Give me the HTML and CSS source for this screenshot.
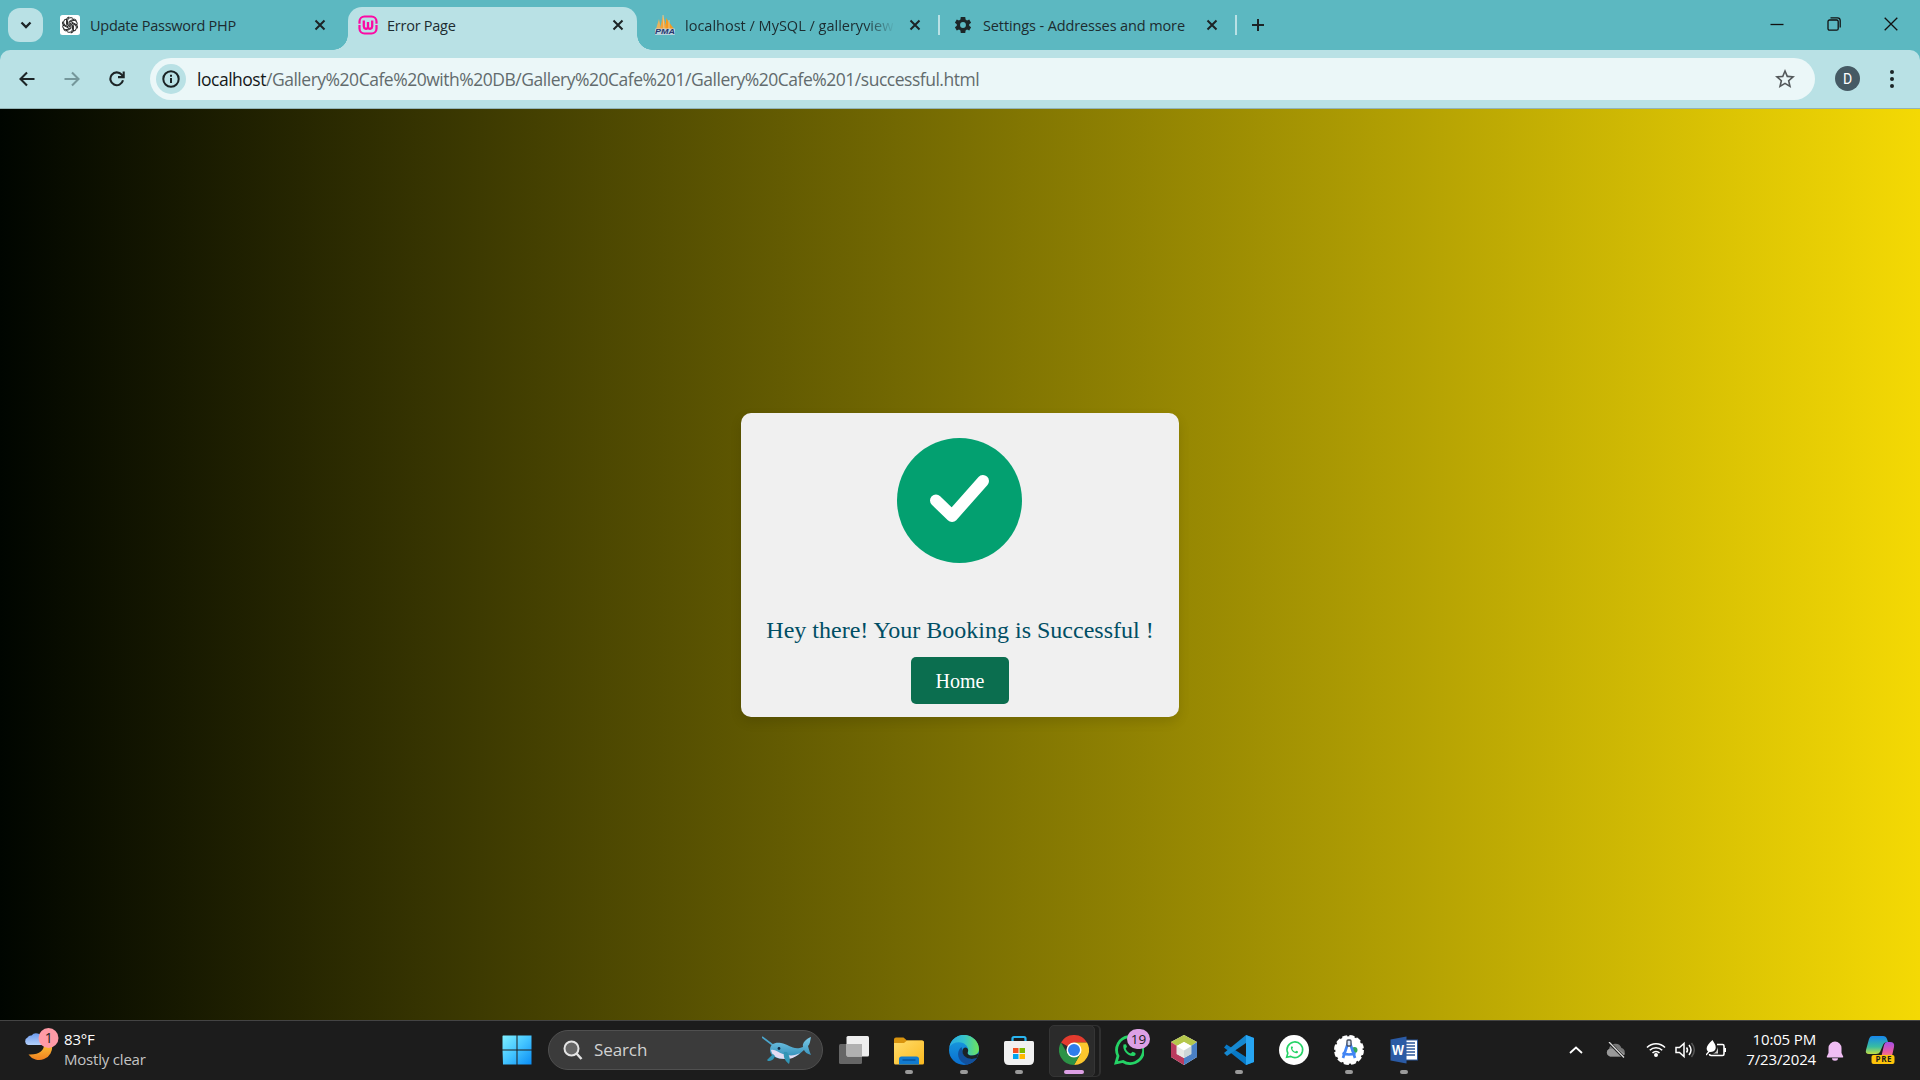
FILE: index.html
```html
<!DOCTYPE html>
<html lang="en">
<head>
<meta charset="utf-8">
<title>Error Page</title>
<link rel="stylesheet" href="styles.css">
</head>
<body>
<header class="tabstrip">
  <button class="tab-search"><svg width="12" height="8" viewBox="0 0 12 8"><path d="M1.500 1.500 6 6l4.500-4.500" fill="none" stroke="#1c2426" stroke-width="2.300"/></svg></button>
  <div class="tab first">
    <svg class="fav" viewBox="0 0 20 20"><rect width="20" height="20" rx="2.500" fill="#fff"/><g fill="none" stroke="#222" stroke-width=".95"><g id="petal"><path d="M7.500 9.200V5.800A3.300 3.300 0 0 1 13.600 4.200M9 10.500V6.600l3.500-2a3.300 3.300 0 0 1 4 .8"/></g><use href="#petal" transform="rotate(60 10 10)"/><use href="#petal" transform="rotate(120 10 10)"/><use href="#petal" transform="rotate(180 10 10)"/><use href="#petal" transform="rotate(240 10 10)"/><use href="#petal" transform="rotate(300 10 10)"/></g></svg>
    <span class="title t1">Update Password PHP</span>
    <svg class="x" viewBox="0 0 12 12"><path d="m1.500 1.500 9 9m0-9-9 9"/></svg>
  </div>
  <div class="tab active">
    <svg class="fav" viewBox="0 0 20 20"><rect x="1.500" y="1.500" width="17" height="17" rx="5" fill="none" stroke="#fb0ba4" stroke-width="2.200"/><path d="M0 9.300h4M16 9.300h4" stroke="#b9e1e5" stroke-width="1.300"/><path d="M5.800 5.500v6a2.300 2.300 0 0 0 4.200 1.200V7v5.700a2.300 2.300 0 0 0 4.200-1.200v-6" fill="none" stroke="#fb0ba4" stroke-width="2.300"/></svg>
    <span class="title t2">Error Page</span>
    <svg class="x" viewBox="0 0 12 12"><path d="m1.500 1.500 9 9m0-9-9 9"/></svg>
  </div>
  <div class="tab">
    <svg class="fav" viewBox="0 0 20 20"><path d="M1 14 4 4l2 10z" fill="#e9b45e"/><path d="m5 14 3-14 4 14z" fill="#f3a33a"/><path d="M11 14V3l8 11z" fill="#f59a20"/><path d="M8 0l1 14M14 5v9" stroke="#e6d3a5" stroke-width=".8"/><rect x="0" y="13.500" width="20" height="6.500" rx="1" fill="#d5dce6" opacity=".75"/><text x="0" y="19.300" textLength="20" lengthAdjust="spacingAndGlyphs" class="pma">PMA</text></svg>
    <span class="title t3">localhost / MySQL / galleryview</span>
    <svg class="x" viewBox="0 0 12 12"><path d="m1.500 1.500 9 9m0-9-9 9"/></svg>
    <i class="sep"></i>
  </div>
  <div class="tab">
    <svg class="fav gear" viewBox="0 0 24 24"><path fill="#1c2628" d="M19.400 13c.1-.3.1-.6.1-1s0-.7-.1-1l2.300-1.700-2.200-3.900-2.700 1.100c-.5-.4-1.100-.7-1.700-1L14.700 2.500H9.300L8.900 5.500c-.6.300-1.200.6-1.700 1L4.500 5.400 2.300 9.300 4.600 11c-.1.300-.1.700-.1 1s0 .7.100 1l-2.300 1.700 2.200 3.900 2.700-1.100c.5.400 1.100.7 1.700 1l.4 3h5.400l.4-3c.6-.3 1.200-.6 1.700-1l2.700 1.100 2.200-3.900zM12 15.500a3.500 3.500 0 1 1 0-7 3.500 3.500 0 0 1 0 7z"/></svg>
    <span class="title t4">Settings - Addresses and more</span>
    <svg class="x" viewBox="0 0 12 12"><path d="m1.500 1.500 9 9m0-9-9 9"/></svg>
    <i class="sep"></i>
  </div>
  <svg class="plus" width="14" height="14" viewBox="0 0 14 14"><path d="M7 1v12M1 7h12" stroke="#1c2426" stroke-width="2"/></svg>
  <div class="window-controls">
    <svg viewBox="0 0 14 14"><path d="M.5 7.500h13"/></svg>
    <svg viewBox="0 0 14 14"><rect x="1" y="3" width="10.200" height="10.200" rx="1.500"/><path d="M3.500.8h7a2.700 2.700 0 0 1 2.700 2.700v7"/></svg>
    <svg viewBox="0 0 14 14"><path d="m.7.7 12.600 12.600M13.300.7.700 13.300"/></svg>
  </div>
</header>
<div class="toolbar-wrap">
<nav class="toolbar">
  <svg class="nav-icon" viewBox="0 0 16 16"><path d="M15.500 8H1.800M8 1.500 1.500 8 8 14.500"/></svg>
  <svg class="nav-icon off" viewBox="0 0 16 16"><path d="M.5 8h13.700M8 1.500 14.500 8 8 14.500"/></svg>
  <svg class="nav-icon" viewBox="0 0 16 16"><path d="M14 9.300a6.400 6.400 0 1 1-1.300-5.600L14.500 5.500M14.700.5v5.600H9"/></svg>
  <div class="omnibox">
    <span class="info"><svg width="18" height="18" viewBox="0 0 18 18"><circle cx="9" cy="9" r="7.700" fill="none" stroke="#1a2325" stroke-width="2"/><path d="M9 8v5M9 4.800v2" stroke="#1a2325" stroke-width="2"/></svg></span>
    <span class="url"><b>localhost</b>/Gallery%20Cafe%20with%20DB/Gallery%20Cafe%201/Gallery%20Cafe%201/successful.html</span>
    <svg class="star" viewBox="0 0 24 24"><path fill="#54595b" d="m22 9.240-7.190-.62L12 2 9.190 8.630 2 9.240l5.460 4.730L5.820 21 12 17.270 18.180 21l-1.630-7.030zM12 15.400l-3.760 2.270 1-4.280-3.320-2.880 4.380-.38L12 6.100l1.710 4.040 4.380.38-3.320 2.880 1 4.280z"/></svg>
  </div>
  <span class="avatar">D</span>
  <svg class="dots" width="6" height="20" viewBox="0 0 6 20"><circle cx="3" cy="3" r="2"/><circle cx="3" cy="10" r="2"/><circle cx="3" cy="17" r="2"/></svg>
</nav>
</div>
<main class="page">
  <section class="card">
    <svg class="check" viewBox="0 0 125 125"><circle cx="62.500" cy="62.500" r="62.500" fill="#03a070"/><path d="m39 62.500 16 15.500 31-35" fill="none" stroke="#fff" stroke-width="12" stroke-linecap="round" stroke-linejoin="round"/></svg>
    <p class="message">Hey there! Your Booking is Successful !</p>
    <a class="home">Home</a>
  </section>
</main>
<footer class="taskbar">
  <div class="weather">
    <svg width="36" height="36" viewBox="0 0 36 36"><defs><linearGradient id="moon" x2="0" y2="1"><stop offset="0" stop-color="#fbbd34"/><stop offset="1" stop-color="#f08020"/></linearGradient><linearGradient id="cloud" x2="0" y2="1"><stop offset="0" stop-color="#6c9bee"/><stop offset="1" stop-color="#b4d0fa"/></linearGradient></defs><path d="M27 17a13 13 0 0 1-23.500 9.500C15 27 19 22 19 17z" transform="translate(1 1)" fill="url(#moon)"/><path d="M4 18a4 4 0 0 1-.5-7.500 4 4 0 0 1 4-2 6 6 0 0 1 10.500 2.500 3.500 3.500 0 0 1 0 7z" fill="url(#cloud)"/><circle cx="24.500" cy="11" r="10" fill="#ff9aa6"/><text x="24.800" y="16" text-anchor="middle" class="badge-text">1</text></svg>
    <div class="weather-text"><div class="temp">83°F</div><div class="cond">Mostly clear</div></div>
  </div>
  <div class="apps">
    <svg class="start" width="30" height="30" viewBox="0 0 30 30"><defs><linearGradient id="win" x2="1" y2="1"><stop offset="0" stop-color="#7ff0ff"/><stop offset=".5" stop-color="#43c4ff"/><stop offset="1" stop-color="#0a8df5"/></linearGradient></defs><path fill="url(#win)" d="M1 .5h13.500v14H.5V1zM15.500.5h14v14h-14zM.5 15.500h14v14H1zM15.500 15.500h14v14h-14z"/></svg>
    <div class="search">
      <svg width="20" height="20" viewBox="0 0 20 20"><circle cx="8.500" cy="8.500" r="7" fill="#666" stroke="#e4e4e4" stroke-width="2"/><path d="m13.500 13.500 5 5.500" stroke="#e4e4e4" stroke-width="2.500"/></svg>
      <span class="search-label">Search</span>
      <svg class="whale" width="50" height="28" viewBox="0 0 50 28"><defs><linearGradient id="wh" x2="0" y2="1"><stop offset="0" stop-color="#7ccbe9"/><stop offset="1" stop-color="#2c8ab5"/></linearGradient></defs><path d="m0 1 12 9" stroke="#4ba6cd" stroke-width="1.700"/><path d="M8 14c0-6 5-8 11-7 8 1 12 8 22 4C40 7 44 3 49 1c-1 5-1 7-3 9 1 4 2 7 3 9-4-1-6-3-7-5-6 6-12 9-19 9C14 23 8 20 8 14z" fill="url(#wh)"/><path d="M9 14c4-1 8 3 12 4 6 2 12 2 17-1-5 5-10 6-15 6-8 0-13-3-14-9z" fill="#e3dcf2"/><path d="m11 18-6 6 1 1c4 0 6-2 7-5zM22 16c-1 5 1 9 5 12 2-5 0-9-2-12z" fill="#3295b5"/><circle cx="17" cy="12.500" r="1.400" fill="#152b45"/></svg>
    </div>
    <div class="app"><svg viewBox="0 0 30 30"><rect x="0" y="9" width="23" height="20" rx="1.500" fill="#666"/><rect x="7.500" y="1" width="22.500" height="20.500" rx="1.500" fill="#eee"/><path d="M7.500 9H23v12.500H9a1.500 1.500 0 0 1-1.500-1.500z" fill="#b1b1b1"/></svg></div>
    <div class="app run"><svg viewBox="0 0 30 30"><defs><linearGradient id="fo" x2="1" y2="1"><stop offset="0" stop-color="#ffdc6b"/><stop offset="1" stop-color="#fbb91f"/></linearGradient></defs><path d="M0 4.500Q0 2.500 2 2.500h7.500L13 5.500h15q2 0 2 2V14H0z" fill="#d9940e"/><path d="M0 8h10l3-2.500h15q2 0 2 2V28q0 1.500-1.500 1.500h-27Q0 29.500 0 28z" fill="url(#fo)"/><path d="M5 29.500V24q0-2.500 2.500-2.500h15q2.500 0 2.500 2.500v5.500z" fill="#117bd0"/><path d="M8.500 25h13" stroke="#07539e" stroke-width="1.500"/></svg></div>
    <div class="app run"><svg viewBox="0 0 30 30"><defs><linearGradient id="e1" x2="1"><stop offset="0" stop-color="#27a9e5"/><stop offset=".5" stop-color="#36c3cb"/><stop offset="1" stop-color="#6ee45a"/></linearGradient><linearGradient id="e2" x2="0" y2="1"><stop offset="0" stop-color="#1aa0e0"/><stop offset="1" stop-color="#0a6ecf"/></linearGradient></defs><circle cx="15" cy="15" r="15" fill="url(#e2)"/><path d="M.3 12A15 15 0 0 1 30 14c0 4-3 6.500-7 6.500-4 0-5-2-4-4 .5-2 0-6-5-8.500C9 6 3 8 .3 12z" fill="url(#e1)"/><path d="M12.500 12c-6 5-4 15 5.500 17.700 4-.7 8-3.200 10.300-7.200-6 3-13 0-14.300-4-.6-2-.8-4-1.500-6.500z" fill="#12509c"/><path d="M19 16.500c-1 2 0 4 4 4 3 0 5-1 6.500-2.500l-1.200 4.500c-5 3-12 1-14-3-1.500-3-1-6 1.700-7 2.500 0 3.700 2 3 4z" fill="#1c2227"/></svg></div>
    <div class="app run"><svg viewBox="0 0 30 30"><path d="M8.500 7V3.500Q8.500 2 10 2h10q1.500 0 1.500 1.500V7" fill="none" stroke="#29b5f0" stroke-width="2.200"/><path d="M1.500 6h27q1.500 0 1.500 1.500V25q0 5-5 5H5q-5 0-5-5V7.500Q0 6 1.500 6z" fill="#f1f1f1"/><path fill="#f25022" d="M9 13h5.500v5H9z"/><path fill="#7fba00" d="M15.500 13H21v5h-5.500z"/><path fill="#00a4ef" d="M9 19h5.500v5H9z"/><path fill="#ffb900" d="M15.500 19H21v5h-5.500z"/></svg></div>
    <div class="app current"><svg viewBox="0 0 30 30"><path d="M15 15 2 7.500A15 15 0 0 1 28 7.500H15z" fill="#e33b2e"/><path d="M15 7.500h13A15 15 0 0 1 15 30l6.500-11.200z" fill="#fcc62d"/><path d="M2 7.500A15 15 0 0 0 15 30l6.500-11.200-6.500 3.700-6.500-3.700z" fill="#2c9346"/><circle cx="15" cy="15" r="7.500" fill="#fff"/><circle cx="15" cy="15" r="6" fill="#2f7deb"/></svg></div>
    <div class="app"><svg viewBox="0 0 30 30"><g id="wa" fill="none" stroke="#25d366" stroke-width="2.800"><path d="M2 28 4 21A13.500 13.500 0 1 1 9 26.500z"/><path d="M9.500 9.500C8 15 14 22 20 21c2-1 2-2.500 1-3.200l-2.500-1-1.700 1.700C14 17.500 12.500 16 11.700 13.500l1.300-1.700-1-2.500z" fill="#25d366" stroke="none"/></g></svg><span class="count">19</span></div>
    <div class="app"><svg viewBox="0 0 30 30"><path d="M15 0 28 7v15l-13 8L2 22V7z" fill="#fff"/><path d="M15 0 28 7l-6 4-7-4-7 4-6-4z" fill="#b5c74c"/><path d="m28 7-6 4v8l-7 4v7l13-8z" fill="#4a80c5"/><path d="m2 7 6 4v8l7 4v7L2 22z" fill="#bb3b5e"/><path d="m15 7 7.500 4L15 15.500 7.500 11z" fill="#fff"/><path d="M7.500 11 15 15.500V23l-7.500-4z" fill="#e5e8e4"/><path d="m22.500 11-7.500 4.500V23l7.500-4z" fill="#ccd6d6"/></svg></div>
    <div class="app run"><svg viewBox="0 0 30 30"><path d="M22 0 30 3v24l-8 3L0 12.500 2.500 9.500 22 22z" fill="#0879c6"/><path d="M22 0v8L3 21 0 18z" fill="#1688d0"/><path d="m22 0 8 3v24l-8 3z" fill="#27a5f2"/></svg></div>
    <div class="app"><svg viewBox="0 0 30 30"><circle cx="15" cy="15" r="15" fill="#fff"/><use href="#wa" transform="translate(6.500 6) scale(.58)"/></svg></div>
    <div class="app run"><svg viewBox="0 0 30 30"><circle cx="15" cy="15" r="13.700" fill="#fff" stroke="#fff" stroke-width="2.500" stroke-dasharray="5 2.170"/><circle cx="20.500" cy="15" r="3" fill="#35a85a"/><path d="M14 8 9 23M16 8l5 15M8.500 18q6.500 3 13 0" fill="none" stroke="#4285f4" stroke-width="2.700"/><rect x="13" y="5" width="4" height="6" rx="1" fill="#d9e5f7" stroke="#444c5c" stroke-width="1.300"/></svg></div>
    <div class="app run"><svg class="word" viewBox="0 0 30 30"><rect x="15" y="5" width="13.500" height="20" fill="#fff" stroke="#2b579a"/><path d="M17 8h9m-9 3h9m-9 3h9m-9 3h9m-9 3h9" stroke="#2b579a" stroke-width="1.500"/><path d="M1.500 4.500 17.500 1.500v27l-16-3z" fill="#2b5ba5"/><text x="3" y="20" textLength="12" lengthAdjust="spacingAndGlyphs" class="word-w">W</text></svg></div>
  </div>
  <div class="tray">
    <svg class="chev" width="14" height="8" viewBox="0 0 14 8"><path d="m1 7 6-5.500L13 7" fill="none" stroke="#fff" stroke-width="1.800"/></svg>
    <svg class="cloud" width="20" height="16" viewBox="0 0 20 16"><path d="M4 14.500a4 4 0 0 1-1-7.500 6.500 6.500 0 0 1 12.500-1A4.500 4.500 0 0 1 16 14.500z" fill="#777"/><path d="M4 14.500a4 4 0 0 1-1-7.500l8-1 8 6-3 2.500z" fill="#999"/><path d="m3 .5 15 15" stroke="#1c1c1c" stroke-width="3"/><path d="m3 0 15 15.500" stroke="#ddd" stroke-width="1.300"/></svg>
    <svg class="wifi" width="20" height="16" viewBox="0 0 20 16" fill="none" stroke="#fff" stroke-width="1.600"><path d="M1 6.500a12.700 12.700 0 0 1 18 0M3.800 9.300a8.700 8.700 0 0 1 12.400 0M6.500 12a5 5 0 0 1 7 0"/><circle cx="10" cy="14" r="1.200" fill="#fff"/></svg>
    <svg class="sound" width="20" height="18" viewBox="0 0 20 18" fill="none" stroke="#fff" stroke-width="1.500"><path d="M1 6.500h3.500L9 2.500v13l-4.500-4H1z"/><path d="M11.500 6.500q2 2.500 0 5M14 4q4 5 0 10"/><path d="M16.500 2q5.500 7 0 14" stroke="#555"/></svg>
    <svg class="battery" width="20" height="18" viewBox="0 0 20 18"><path d="M11 4.500h5.500q1.500 0 1.500 1.500v8q0 1.500-1.500 1.500H5q-1.500 0-1.500-1.500M19.300 8v4" fill="none" stroke="#fff" stroke-width="1.600"/><path d="M12 7v6.500H7q4-1 5-6.500z" fill="#ccc"/><path d="M6.500 0C8 3 10.500 5 9.500 9c-.7 3-6 4-8 2C-.5 8 1 5 6.500 0z" fill="#fff"/><path d="M0 15c2-2 4-5 6-7" stroke="#fff" stroke-width="1.300"/></svg>
    <div class="clock"><div class="time">10:05 PM</div><div class="date">7/23/2024</div></div>
    <svg class="bell" width="18" height="20" viewBox="0 0 18 20"><path d="M9 .5a6.500 6.500 0 0 1 6.500 6.500v5l1.700 3.500q.3 1-.7 1H1.500q-1 0-.7-1L2.500 12V7A6.500 6.500 0 0 1 9 .5zM6 17.300h6a3 2.500 0 0 1-6 0z" fill="#f0bdf3"/></svg>
    <svg class="copilot" width="32" height="30" viewBox="0 0 32 30"><defs><linearGradient id="c1" x2="0" y2="1"><stop offset="0" stop-color="#1787ed"/><stop offset=".6" stop-color="#39bda0"/><stop offset="1" stop-color="#c0dd45"/></linearGradient><linearGradient id="c2" x2="0" y2="1"><stop offset="0" stop-color="#a34fe8"/><stop offset=".6" stop-color="#ed5ba0"/><stop offset="1" stop-color="#ffa253"/></linearGradient></defs><path d="M7 1h11q3 0 4 3l1 3q-4 0-5 3l-3 7q-1 2-4 2H4q-4 0-3-4L4 4q1-3 3-3z" fill="url(#c1)"/><path d="M22 7h3q5 0 4 5l-2 9q-1 3-4 3H15q1-1 1.500-3l2.500-11q1-3 3-3z" fill="url(#c2)"/><rect x="6.500" y="20" width="23" height="9" rx="2" fill="#fdc30a"/><text x="10.500" y="27.300" textLength="16" class="pre">PRE</text></svg>
  </div>
</footer>
</body>
</html>
```
FILE: styles.css
```css
* { box-sizing: border-box; }
body {
  margin: 0;
  width: 1920px;
  height: 1080px;
  overflow: hidden;
  display: flex;
  flex-direction: column;
  font-family: "Open Sans", "Noto Sans", sans-serif;
}
svg { display: block; flex: none; }

/* Tab strip */
.tabstrip {
  height: 50px;
  flex: none;
  display: flex;
  background: #5cb8c1;
}
.tab-search {
  width: 35px;
  height: 34px;
  margin: 8px 7px 0 8px;
  padding: 0;
  border: 0;
  border-radius: 12px;
  background: #b9e1e5;
  display: flex;
  align-items: center;
  justify-content: center;
}
.tab {
  position: relative;
  width: 297px;
  height: 50px;
  display: flex;
  align-items: center;
  padding-left: 10px;
}
.tab.active {
  width: 289px;
  margin: 7px 8px 0 1px;
  height: 43px;
  padding: 0 0 7px 10px;
  background: #b9e1e5;
  border-radius: 14px 14px 0 0;
}
.tab.active::before,
.tab.active::after {
  content: "";
  position: absolute;
  bottom: 0;
  width: 15px;
  height: 15px;
}
.tab.active::before { left: -15px; background: radial-gradient(circle at 0 0, transparent 14.5px, #b9e1e5 15px); }
.tab.active::after { right: -15px; background: radial-gradient(circle at 100% 0, transparent 14.5px, #b9e1e5 15px); }
.fav { width: 20px; height: 20px; margin-right: 10px; }
.gear { margin-left: 1px; }
.title {
  width: 208px;
  height: 24px;
  line-height: 24px;
  margin: 2px 16px 0 0;
  overflow: hidden;
  white-space: nowrap;
  font-size: 14.5px;
  color: #1c2c30;
}
.t1 { letter-spacing: -.25px; }
.t2 { letter-spacing: -.25px; margin-left: -1px; margin-right: 17px; }
.t3 { -webkit-mask-image: linear-gradient(90deg, #000 180px, transparent 210px); }
.t4 { letter-spacing: -.12px; margin-right: 15px; }
.x { width: 12px; height: 12px; fill: none; stroke: #1c2426; stroke-width: 2; }
.sep { width: 2px; height: 20px; margin-left: 17px; background: #b9e1e5; }
.plus { margin: 18px 0 0 12px; }
.window-controls { margin: 17px 22px 0 auto; display: flex; gap: 43px; }
.window-controls svg { width: 14px; height: 14px; fill: none; stroke: #111; stroke-width: 1.3; }
.pma { font: italic bold 7px "Liberation Sans", sans-serif; fill: #28366f; }

/* Toolbar */
.toolbar-wrap { height: 59px; flex: none; background: #5cb8c1; }
.toolbar {
  height: 59px;
  display: flex;
  align-items: center;
  padding: 0 25px 1px 19px;
  background: #b9e1e5;
  border-radius: 10px 10px 0 0;
  border-bottom: 1px solid #93b3b6;
}
.nav-icon { width: 16px; height: 16px; margin-right: 29px; fill: none; stroke: #1c2426; stroke-width: 2.1; }
.nav-icon.off { stroke: #75979b; }
.omnibox {
  width: 1665px;
  height: 42px;
  margin-left: -4px;
  display: flex;
  align-items: center;
  padding: 0 18px 0 6px;
  border-radius: 21px;
  background: #ebf7f8;
}
.info {
  width: 30px;
  height: 30px;
  border-radius: 50%;
  background: #b9e1e5;
  display: flex;
  align-items: center;
  justify-content: center;
}
.url { flex: 1; margin-left: 11px; padding-top: 1px; font-size: 17.5px; line-height: 26px; letter-spacing: -.48px; white-space: nowrap; color: #626b6d; }
.url b { font-weight: 400; color: #15191a; }
.star { width: 24px; height: 24px; }
.avatar {
  width: 25px;
  height: 25px;
  margin-left: 20px;
  border-radius: 50%;
  background: #455a64;
  color: #fff;
  font: 14px/26px Roboto, sans-serif;
  text-align: center;
}
.dots { margin-left: auto; fill: #1c2426; }

/* Page */
.page {
  flex: 1;
  display: flex;
  align-items: center;
  justify-content: center;
  background: linear-gradient(to right, #000500, #f4d904);
}
.card {
  width: 438px;
  height: 304px;
  padding-top: 25px;
  display: flex;
  flex-direction: column;
  align-items: center;
  border-radius: 10px;
  background: #f0f0f0;
  box-shadow: 0 5px 12px rgba(0, 0, 0, .12);
  font-family: "Liberation Serif", serif;
}
.check { width: 125px; height: 125px; margin-right: 1px; }
.message { margin: 53px 0 0; font-size: 24px; line-height: 28px; white-space: nowrap; color: #004e64; }
.home {
  width: 98px;
  height: 47px;
  margin-top: 13px;
  border-radius: 5px;
  background: #0b6e4f;
  color: #fff;
  font-size: 20px;
  line-height: 49px;
  text-align: center;
}

/* Taskbar */
.taskbar {
  height: 60px;
  flex: none;
  display: grid;
  grid-template-columns: 502px 930px 1fr;
  background: #1c1c1c;
  border-top: 1px solid #444;
}
.weather { display: flex; padding: 6px 0 0 24px; }
.weather-text { margin-left: 4px; font-size: 15px; line-height: 20px; letter-spacing: -.2px; color: #fff; white-space: nowrap; padding-top: 2px; }
.cond { color: #c4c4c4; }
.badge-text { font: 14px "Open Sans", sans-serif; fill: #222; }
.apps { display: flex; align-items: center; height: 57px; }
.start { margin-top: 1px; }
.search {
  width: 275px;
  height: 40px;
  margin: 0 3px 0 16px;
  padding: 0 10px 0 14px;
  display: flex;
  align-items: center;
  border: 1px solid #505050;
  border-radius: 20px;
  background: #3b3b3b;
}
.search-label { flex: 1; margin-left: 11px; font-size: 17px; color: #d2d2d2; letter-spacing: -.1px; }
.app {
  position: relative;
  width: 55px;
  height: 57px;
  flex: none;
  display: flex;
  align-items: center;
  justify-content: center;
}
.app svg { width: 30px; height: 30px; position: relative; }
.run::after, .current::after {
  content: "";
  position: absolute;
  left: 24px;
  bottom: 4px;
  width: 8px;
  height: 4px;
  border-radius: 2px;
  background: #9a9a9a;
}
.current::after { left: 18px; width: 20px; background: #dda0e5; }
.current::before {
  content: "";
  position: absolute;
  left: 3px;
  top: 4px;
  width: 44px;
  height: 50px;
  border-radius: 5px;
  background: #2b2b2b;
  border: 1px solid #353535;
  box-shadow: 5px 0 0 -1px #1c1c1c, 6px 0 0 #303030;
}
.count {
  position: absolute;
  left: 26px;
  top: 8px;
  width: 23px;
  height: 20px;
  border-radius: 10px;
  background: #dda0e5;
  color: #1c1c1c;
  font-size: 13.5px;
  line-height: 20px;
  text-align: center;
}
.word-w { font: bold 14px "Liberation Sans", sans-serif; fill: #fff; }
.tray { display: flex; align-items: center; padding-left: 137px; }
.chev { margin-top: -2px; }
.cloud { margin-left: 23px; margin-top: -1px; }
.wifi { margin-left: 20px; margin-top: -3px; }
.sound { margin-left: 9px; margin-top: -2px; }
.battery { margin-left: 11px; margin-top: -4px; }
.clock { width: 81px; margin-left: 9px; margin-top: -3px; text-align: right; font-size: 15px; line-height: 20px; letter-spacing: -.15px; color: #fff; white-space: nowrap; }
.bell { margin-left: 10px; }
.copilot { margin-left: 21px; margin-top: -1px; }
.pre { font: bold 8px "Open Sans", sans-serif; fill: #1c1c1c; }
```
